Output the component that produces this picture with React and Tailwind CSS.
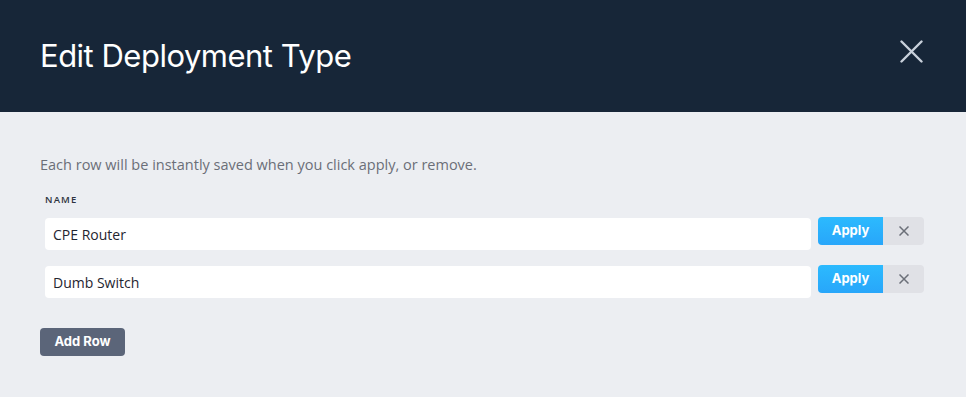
import React, { useState } from 'react';

const rowsInit = [
  { id: 1, name: 'CPE Router' },
  { id: 2, name: 'Dumb Switch' },
];

export default function App() {
  const [rows, setRows] = useState(rowsInit);

  return (
    <div className="w-[966px] h-[397px] bg-[#eceef2] flex flex-col" style={{ fontFamily: 'Inter, "Noto Sans", sans-serif' }}>

      {/* header */}
      <div className="h-[112px] bg-[#172638] flex items-center justify-between pl-10 pr-[43px] shrink-0">
        <h1 className="text-[31px] font-normal text-white tracking-[-0.5px] mt-[1px]">Edit Deployment Type</h1>
        <svg className="-mt-[9px]" width="23" height="23" viewBox="0 0 23 23" fill="none" stroke="#c9d1db" strokeWidth="2.4" strokeLinecap="round">
          <path d="M1.5 1.5L21.5 21.5M21.5 1.5L1.5 21.5" />
        </svg>
      </div>

      {/* body */}
      <div className="flex-1 px-10 pt-[43px]">
        <p className="text-[14.5px] text-[#6b6f78] leading-5" style={{ fontFamily: '"Open Sans", sans-serif' }}>
          Each row will be instantly saved when you click apply, or remove.
        </p>

        <div className="pl-[5px] mt-[17px]">
          <div className="text-[9.5px] font-semibold tracking-[1.2px] text-[#2d3340] leading-4" style={{ fontFamily: '"Open Sans", sans-serif' }}>NAME</div>

          <div className="flex flex-col gap-[15px] mt-[9px]">
            {rows.map((row) => (
              <div key={row.id} className="flex items-start">
                <input
                  value={row.name}
                  onChange={(e) => setRows(rows.map(r => r.id === row.id ? { ...r, name: e.target.value } : r))}
                  className="w-[766px] h-[32px] mt-[1px] bg-white rounded-[4px] px-2 text-[14px] text-[#1f2530] outline-none"
                  style={{ fontFamily: '"Open Sans", sans-serif' }}
                />
                <button className="ml-[7px] w-[65px] h-[28px] rounded-l-[4px] bg-gradient-to-b from-[#2cbafe] to-[#28a6fa] text-white text-[13px] font-bold">
                  Apply
                </button>
                <button className="w-[41px] h-[28px] rounded-r-[4px] bg-[#e0e1e6] flex items-center justify-center">
                  <svg width="10" height="10" viewBox="0 0 10 10" fill="none" stroke="#6b6f78" strokeWidth="1.5">
                    <path d="M0.5 0.5L9.5 9.5M9.5 0.5L0.5 9.5" />
                  </svg>
                </button>
              </div>
            ))}
          </div>
        </div>

        <button className="mt-[30px] w-[85px] h-[28px] rounded-[4px] bg-[#5b6579] text-white text-[13px] font-bold">
          Add Row
        </button>
      </div>
    </div>
  );
}
